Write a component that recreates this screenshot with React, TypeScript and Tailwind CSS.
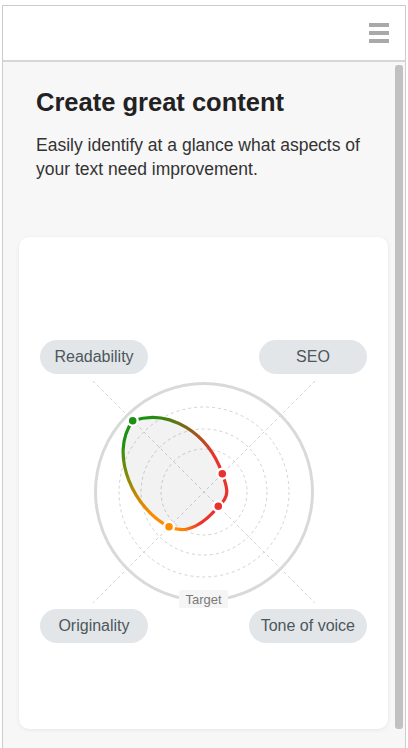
import React from "react";

// radar shape, hand-fit cubic segments between the four axis points
const GREEN = { x: 132.7, y: 420.7 };
const RED1 = { x: 222.3, y: 473.7 };
const RED2 = { x: 218.3, y: 506.3 };
const ORANGE = { x: 169, y: 526.7 };

const OX = 19; // chart svg origin in page coords
const OY = 374;

function p(x: number, y: number) {
  return `${(x - OX).toFixed(1)} ${(y - OY).toFixed(1)}`;
}

const SEG_A = `M${p(GREEN.x, GREEN.y)} C${p(170, 408)} ${p(208.3, 433.7)} ${p(RED1.x, RED1.y)}`;
const SEG_B = `M${p(RED1.x, RED1.y)} C${p(227, 487)} ${p(231, 496)} ${p(RED2.x, RED2.y)}`;
const SEG_C = `M${p(RED2.x, RED2.y)} C${p(206, 522)} ${p(187, 536)} ${p(ORANGE.x, ORANGE.y)}`;
const SEG_D = `M${p(ORANGE.x, ORANGE.y)} C${p(135, 510)} ${p(108, 455)} ${p(GREEN.x, GREEN.y)}`;

const AREA =
  `M${p(GREEN.x, GREEN.y)} C${p(170, 408)} ${p(208.3, 433.7)} ${p(RED1.x, RED1.y)}` +
  ` C${p(227, 487)} ${p(231, 496)} ${p(RED2.x, RED2.y)}` +
  ` C${p(206, 522)} ${p(187, 536)} ${p(ORANGE.x, ORANGE.y)}` +
  ` C${p(135, 510)} ${p(108, 455)} ${p(GREEN.x, GREEN.y)} Z`;

const C_GREEN = "#1a9111";
const C_RED = "#e8322e";
const C_ORANGE = "#ff8a00";

function Pill({ children }: { children: React.ReactNode }) {
  return (
    <div className="flex h-[34px] min-w-[108px] items-center justify-center rounded-full bg-[#e2e6e8] px-3 text-[16px] text-[#4d575d]">
      {children}
    </div>
  );
}

function Radar() {
  const cx = 185;
  const cy = 118;
  const d = 111;
  return (
    <svg width="369" height="235" viewBox="0 0 369 235" className="block">
      <defs>
        <linearGradient id="gA" gradientUnits="userSpaceOnUse" x1={150 - OX} y1={418 - OY} x2={215 - OX} y2={455 - OY}>
          <stop offset="0" stopColor={C_GREEN} />
          <stop offset="0.45" stopColor="#7a6a10" />
          <stop offset="1" stopColor={C_RED} />
        </linearGradient>
        <linearGradient id="gC" gradientUnits="userSpaceOnUse" x1={212 - OX} y1={512 - OY} x2={180 - OX} y2={530 - OY}>
          <stop offset="0" stopColor={C_RED} />
          <stop offset="0.4" stopColor={C_RED} />
          <stop offset="1" stopColor={C_ORANGE} />
        </linearGradient>
        <linearGradient id="gD" gradientUnits="userSpaceOnUse" x1={0} y1={515 - OY} x2={0} y2={440 - OY}>
          <stop offset="0" stopColor={C_ORANGE} />
          <stop offset="0.5" stopColor="#8a8a05" />
          <stop offset="1" stopColor={C_GREEN} />
        </linearGradient>
      </defs>

      {/* axes */}
      <g stroke="#d2d2d2" strokeWidth="1" strokeDasharray="3 3" fill="none">
        <line x1={cx - d} y1={cy - d} x2={cx + d} y2={cy + d} />
        <line x1={cx + d} y1={cy - d} x2={cx - d} y2={cy + d} />
        <circle cx={cx} cy={cy} r="43" />
        <circle cx={cx} cy={cy} r="63" />
        <circle cx={cx} cy={cy} r="85" />
      </g>
      <circle cx={cx} cy={cy} r="108.5" fill="none" stroke="#d9d9d9" strokeWidth="3" />

      <path d={AREA} fill="rgba(0,0,0,0.05)" />
      <g fill="none" strokeWidth="3.2" strokeLinecap="round">
        <path d={SEG_A} stroke="url(#gA)" />
        <path d={SEG_B} stroke={C_RED} />
        <path d={SEG_C} stroke="url(#gC)" />
        <path d={SEG_D} stroke="url(#gD)" />
      </g>
      <g stroke="#fff" strokeWidth="2.5">
        <circle cx={GREEN.x - OX} cy={GREEN.y - OY} r="5" fill={C_GREEN} />
        <circle cx={RED1.x - OX} cy={RED1.y - OY} r="5" fill={C_RED} />
        <circle cx={RED2.x - OX} cy={RED2.y - OY} r="5" fill={C_RED} />
        <circle cx={ORANGE.x - OX} cy={ORANGE.y - OY} r="5" fill={C_ORANGE} />
      </g>

      {/* target label */}
      <rect x={160} y={216} width={49} height={18} rx={2} fill="#f5f5f5" />
      <text x={184.5} y={229.5} textAnchor="middle" fontSize="13" fill="#7a7a7a" fontFamily="'Liberation Sans', Arial, sans-serif">
        Target
      </text>
    </svg>
  );
}

export default function App() {
  return (
    <div className="h-[748px] w-[408px] overflow-hidden bg-white font-['Liberation_Sans',Arial,sans-serif]">
      <div className="ml-[2px] mt-[5px] flex h-[743px] w-[404px] flex-col border-x border-t border-[#cccccc]">
        {/* header */}
        <div className="flex h-[56px] shrink-0 items-center justify-end border-b-2 border-[#d6d6d6] bg-white pr-[16px]">
          <div className="flex w-[20px] flex-col gap-[4px]">
            <span className="h-[4px] bg-[#a9a9a9]" />
            <span className="h-[4px] bg-[#a9a9a9]" />
            <span className="h-[4px] bg-[#a9a9a9]" />
          </div>
        </div>

        <div className="flex flex-1 bg-[#f7f7f7]">
          <main className="flex-1">
            <div className="pl-[33px] pr-2 pt-[26px]">
              <h1 className="text-[25.5px] font-bold leading-[28px] text-[#222]">Create great content</h1>
              <p className="mt-[17px] text-[17.5px] leading-[24px] text-[#333]">
                Easily identify at a glance what aspects of your text need improvement.
              </p>
            </div>

            <div className="ml-4 mt-[56px] w-[369px] rounded-[10px] bg-white pb-[86px] pt-[103px] shadow-[0_1px_4px_rgba(0,0,0,0.07)]">
              <div className="flex justify-between px-[21px]">
                <Pill>Readability</Pill>
                <Pill>SEO</Pill>
              </div>
              <Radar />
              <div className="flex justify-between px-[21px]">
                <Pill>Originality</Pill>
                <Pill>Tone of voice</Pill>
              </div>
            </div>
          </main>

          {/* scrollbar */}
          <div className="w-[11px] shrink-0 pl-[1px] pt-[3px]">
            <div className="h-[664px] w-[8px] rounded-[3px] bg-[#c1c1c1]" />
          </div>
        </div>
      </div>
    </div>
  );
}
